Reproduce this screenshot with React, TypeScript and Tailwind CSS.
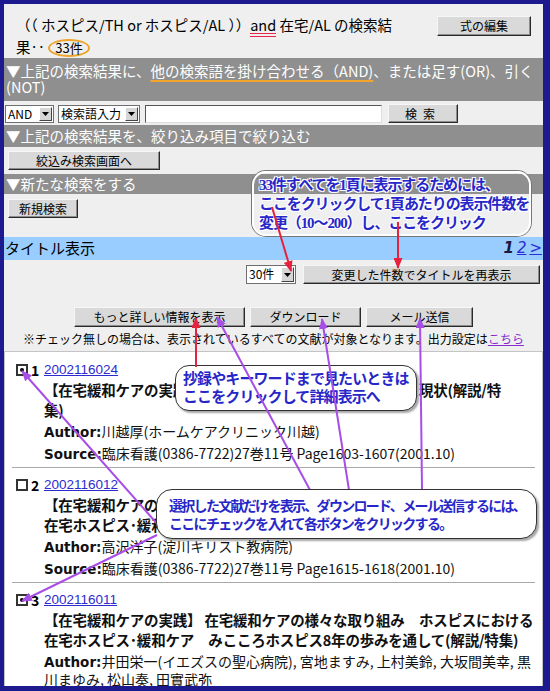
import React from 'react';

type Rec = {
  no: number;
  id: string;
  checked: boolean;
  title: string[];
  author: string[];
  source?: string;
};

const records: Rec[] = [
  {
    no: 1,
    id: '2002116024',
    checked: true,
    title: ['【在宅緩和ケアの実践】 在宅ホスピス・緩和ケアの基準と現状(解説/特', '集)'],
    author: ['川越厚(ホームケアクリニック川越)'],
    source: '臨床看護(0386-7722)27巻11号 Page1603-1607(2001.10)',
  },
  {
    no: 2,
    id: '2002116012',
    checked: false,
    title: ['【在宅緩和ケアの実践】 在宅緩和ケアの様々な取り組み　淀川キリスト教', '在宅ホスピス･緩和ケアの実際(解説/特集)'],
    author: ['高沢洋子(淀川キリスト教病院)'],
    source: '臨床看護(0386-7722)27巻11号 Page1615-1618(2001.10)',
  },
  {
    no: 3,
    id: '2002116011',
    checked: true,
    title: [
      '【在宅緩和ケアの実践】 在宅緩和ケアの様々な取り組み　ホスピスにおける',
      '在宅ホスピス･緩和ケア　みこころホスピス8年の歩みを通して(解説/特集)',
    ],
    author: ['井田栄一(イエズスの聖心病院), 宮地ますみ, 上村美鈴, 大坂間美幸, 黒', '川まゆみ, 松山奏, 田實武弥'],
  },
];

const arrows = [
  { m: 'hr', c: '#e6223f', x1: 272, y1: 207, x2: 291, y2: 271 },
  { m: 'hr', c: '#e6223f', x1: 398, y1: 222, x2: 398, y2: 268 },
  { m: 'hr', c: '#e6223f', x1: 196, y1: 367, x2: 196, y2: 318 },
  { m: 'hp', c: '#a64ee6', x1: 310, y1: 490, x2: 217, y2: 317 },
  { m: 'hp', c: '#a64ee6', x1: 349, y1: 490, x2: 322, y2: 319 },
  { m: 'hp', c: '#a64ee6', x1: 422, y1: 490, x2: 420, y2: 318 },
  { m: 'hp', c: '#a64ee6', x1: 160, y1: 527, x2: 22, y2: 371 },
  { m: 'hp', c: '#a64ee6', x1: 157, y1: 535, x2: 22, y2: 601 },
];

function Btn({ children, className = '' }: { children: React.ReactNode; className?: string }) {
  return (
    <button
      type="button"
      className={`flex items-center justify-center border border-t-[#f6f6f6] border-l-[#f6f6f6] border-r-[#2a2a2a] border-b-[#2a2a2a] bg-[#d9d9d9] text-[12px] leading-none text-black shadow-[inset_-1px_-1px_0_#8c8c8c] ${className}`}
    >
      {children}
    </button>
  );
}

function Select({ label, className = '' }: { label: string; className?: string }) {
  return (
    <div className={`flex h-[18px] items-stretch border border-[#6f6f6f] bg-white ${className}`}>
      <span className="flex-1 whitespace-nowrap pl-[2px] text-[12px] leading-[16px]">{label}</span>
      <span className="m-[1px] flex w-[13px] items-center justify-center border border-t-white border-l-white border-r-[#444] border-b-[#444] bg-[#d6d6d6]">
        <svg width="7" height="4" viewBox="0 0 7 4">
          <path d="M0 0h7L3.5 4z" fill="#000" />
        </svg>
      </span>
    </div>
  );
}

function Bar({ children, className = '' }: { children: React.ReactNode; className?: string }) {
  return <div className={`bg-[#8f8f8f] pl-[2px] text-[14.5px] text-white ${className}`}>{children}</div>;
}

function Check({ checked }: { checked: boolean }) {
  return (
    <span className="flex h-[12px] w-[12px] items-center justify-center border-2 border-[#333] bg-white">
      {checked && <span className="h-[4px] w-[4px] rounded-full bg-black" />}
    </span>
  );
}

function Record({ r }: { r: Rec }) {
  return (
    <div className="mx-[7px] border-b border-[#a8a8a8] pb-[3px] pl-[4px] pt-[7px]">
      <div className="flex h-[20px] items-center">
        <Check checked={r.checked} />
        <span className="ml-[3px] w-[13px] text-[14px] font-bold">{r.no}</span>
        <span className="font-['Liberation_Sans',sans-serif] text-[13.5px] text-[#2b2bd0] underline">{r.id}</span>
      </div>
      <div className="ml-[28px] whitespace-nowrap text-[14.5px] font-bold leading-[20px] tracking-[-0.2px] text-[#111]">
        {r.title.map((t) => (
          <div key={t}>{t}</div>
        ))}
      </div>
      <div className="ml-[28px] mt-[2px] whitespace-nowrap text-[14px] leading-[19px] text-[#111]">
        {r.author.map((a, i) => (
          <div key={a} className={i > 0 ? '-mt-[2px]' : ''}>
            {i === 0 && <span className="font-['DejaVu_Sans',sans-serif] text-[13.5px] font-bold">Author:</span>}
            {a}
          </div>
        ))}
        {r.source && (
          <div className="mt-[2px]">
            <span className="font-['DejaVu_Sans',sans-serif] text-[13.5px] font-bold">Source:</span>
            {r.source}
          </div>
        )}
      </div>
    </div>
  );
}

export default function App() {
  return (
    <div className="relative h-[691px] w-[550px] overflow-hidden border-[#1c1a8e] border-t-4 border-l-4 border-r-[7px] border-b-[5px] bg-[#efefef] font-['Noto_Sans_CJK_JP',sans-serif] text-black">
      {/* search formula */}
      <div className="flex h-[54px] justify-between pl-[12px] pr-[12px] pt-[11px]">
        <p className="whitespace-nowrap text-[14.5px] leading-[20px]">
          （（ ホスピス/TH or ホスピス/AL ））
          <span className="inline-block border-b-[4px] border-double border-[#e8254a] leading-[17px]">and</span> 在宅/AL の検索結
          <br />
          果‥{' '}
          <span className="inline-block rounded-[50%] border-2 border-[#eea52c] px-[5px] text-[13px] leading-[14px]">33件</span>
        </p>
        <Btn className="mt-[1px] h-[20px] w-[94px]">式の編集</Btn>
      </div>

      <Bar className="pb-[6px] pt-[5px] leading-[16px]">
        <div className="whitespace-nowrap">
          ▼上記の検索結果に、
          <span className="underline decoration-[#f2a52a] decoration-2 underline-offset-[3px]">他の検索語を掛け合わせる（AND)</span>
          、または足す(OR)、引く
        </div>
        <div>(NOT)</div>
      </Bar>

      <div className="mt-[3px] flex items-center pl-[1px]">
        <Select label="AND" className="w-[49px]" />
        <Select label="検索語入力" className="ml-[4px] w-[82px]" />
        <div className="ml-[5px] h-[18px] w-[237px] border border-[#555] border-r-[#ddd] border-b-[#ddd] bg-white" />
        <Btn className="ml-[6px] h-[19px] w-[70px] tracking-[6px]">検索</Btn>
      </div>

      <Bar className="mt-[2px] h-[22px] leading-[22px]">▼上記の検索結果を、絞り込み項目で絞り込む</Bar>
      <div className="mt-[4px] pl-[4px]">
        <Btn className="h-[19px] w-[152px]">絞込み検索画面へ</Btn>
      </div>
      <Bar className="mt-[4px] h-[20px] leading-[20px]">▼新たな検索をする</Bar>
      <div className="mt-[5px] pl-[4px]">
        <Btn className="h-[19px] w-[70px]">新規検索</Btn>
      </div>

      {/* title list */}
      <div className="mt-[19px] flex h-[23px] items-center justify-between bg-[#99ccff] pl-[1px] pr-[1px]">
        <span className="text-[15px]">タイトル表示</span>
        <span className="flex items-center gap-[3px] font-['DejaVu_Sans',sans-serif] text-[15px] italic">
          <span className="font-bold text-[#1a1a40]">1</span>
          <span className="text-[#2b2bd0] underline">2</span>
          <span className="not-italic text-[#2b2bd0] underline">&gt;</span>
        </span>
      </div>

      <div className="mt-[5px] flex justify-end gap-[7px] pr-[3px]">
        <Select label="30件" className="h-[19px] w-[50px]" />
        <Btn className="h-[19px] w-[237px]">変更した件数でタイトルを再表示</Btn>
      </div>

      <div className="mt-[23px] flex justify-center gap-[5px]">
        <Btn className="h-[20px] w-[171px]">もっと詳しい情報を表示</Btn>
        <Btn className="h-[20px] w-[111px]">ダウンロード</Btn>
        <Btn className="h-[20px] w-[107px]">メール送信</Btn>
      </div>
      <p className="mt-[3px] h-[17px] text-center text-[12px] leading-[17px]">
        ※チェック無しの場合は、表示されているすべての文献が対象となります。出力設定は
        <span className="text-[#8a2bd0] underline">こちら</span>
      </p>

      <div className="mt-[4px] border border-[#c4c4c4] bg-white pt-[1px]">
        {records.map((r) => (
          <Record key={r.id} r={r} />
        ))}
      </div>

      {/* annotations */}
      <div className="pointer-events-none absolute left-[-4px] top-[-4px] h-[691px] w-[550px]">
        <div className="absolute left-[252px] top-[171px] h-[65px] w-[279px] whitespace-nowrap rounded-[14px] border-2 border-white pl-[5px] pt-[3px] font-['Liberation_Serif','Noto_Sans_CJK_JP',serif] text-[15px] font-bold leading-[19px] tracking-[-1.1px] text-[#2727c9] shadow-[0_0_0_1px_#777] [text-shadow:1px_1px_0_#fff,-1px_-1px_0_#fff,1px_-1px_0_#fff,-1px_1px_0_#fff]">
          <div>33件すべてを1頁に表示するためには、</div>
          <div>ここをクリックして1頁あたりの表示件数を</div>
          <div>変更（10～200）し、ここをクリック</div>
        </div>

        <div className="absolute left-[175px] top-[365px] h-[46px] w-[242px] whitespace-nowrap rounded-[14px] border-[1.5px] border-[#333] bg-white pl-[7px] pt-[3px] text-[15px] font-bold leading-[18px] tracking-[-0.9px] text-[#2727c9] shadow-[2px_2px_2px_rgba(0,0,0,0.35)]">
          <div>抄録やキーワードまで見たいときは</div>
          <div>ここをクリックして詳細表示へ</div>
        </div>

        <svg className="absolute left-0 top-0" width="550" height="691">
          <defs>
            <marker id="hr" markerWidth="11" markerHeight="9" refX="10" refY="4.5" orient="auto" markerUnits="userSpaceOnUse">
              <path d="M0 0L11 4.5L0 9z" fill="#e6223f" />
            </marker>
            <marker id="hp" markerWidth="11" markerHeight="9" refX="10" refY="4.5" orient="auto" markerUnits="userSpaceOnUse">
              <path d="M0 0L11 4.5L0 9z" fill="#a64ee6" />
            </marker>
          </defs>
          {arrows.map((a, i) => (
            <line key={i} x1={a.x1} y1={a.y1} x2={a.x2} y2={a.y2} stroke={a.c} strokeWidth="2" markerEnd={`url(#${a.m})`} />
          ))}
        </svg>

        <div className="absolute left-[156px] top-[489px] h-[50px] w-[381px] whitespace-nowrap rounded-[16px] border-[1.5px] border-[#333] bg-white pl-[12px] pt-[6px] text-[14px] font-bold leading-[18px] tracking-[-1.7px] text-[#2727c9] shadow-[2px_2px_2px_rgba(0,0,0,0.35)]">
          <div>選択した文献だけを表示、ダウンロード、メール送信するには、</div>
          <div>ここにチェックを入れて各ボタンをクリックする。</div>
        </div>
      </div>
    </div>
  );
}
